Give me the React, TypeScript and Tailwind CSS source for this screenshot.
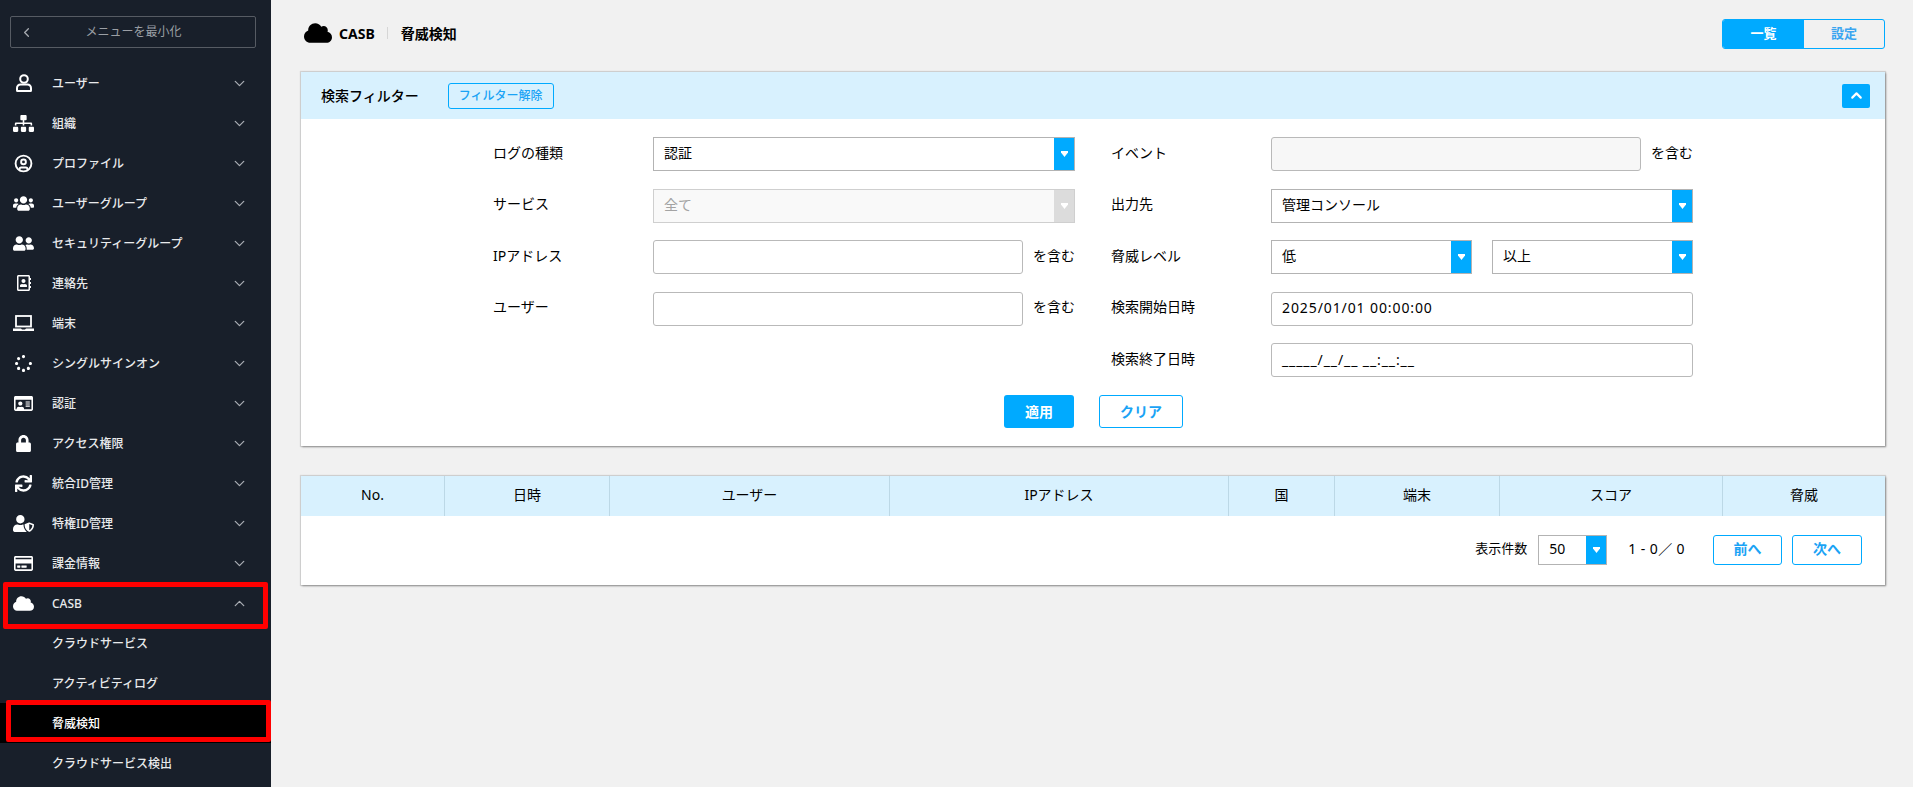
import React from "react";
import { FaSitemap, FaUsers, FaUserFriends, FaRegAddressBook, FaSpinner, FaRegIdCard, FaLock, FaSync, FaUserShield, FaRegCreditCard, FaCloud } from "react-icons/fa";
import { LuChevronDown, LuChevronUp, LuChevronLeft, LuCircleUser } from "react-icons/lu";

const FONT = "font-['Noto_Sans','Noto_Sans_CJK_JP',sans-serif]";

function UserIcon() {
  return (
    <svg width="16" height="18" viewBox="0 0 16 18" fill="none" stroke="currentColor" strokeWidth="2">
      <circle cx="8" cy="5" r="3.8" />
      <path d="M4.5 10.5h7a3.5 3.5 0 0 1 3.5 3.5v2.5a.5.5 0 0 1-.5.5h-13a.5.5 0 0 1-.5-.5V14a3.5 3.5 0 0 1 3.5-3.5z" />
    </svg>
  );
}

function LaptopIcon() {
  return (
    <svg width="21" height="16" viewBox="0 0 21 16" fill="none">
      <rect x="3" y="1" width="15" height="10.5" stroke="currentColor" strokeWidth="1.8" />
      <path d="M0 13.5h8l1 1h3l1-1h8v2.5H0z" fill="currentColor" />
    </svg>
  );
}

type Item = { label: string; icon: React.ReactNode };
const items: Item[] = [
  { label: "ユーザー", icon: <UserIcon /> },
  { label: "組織", icon: <FaSitemap size={21} /> },
  { label: "プロファイル", icon: <LuCircleUser size={19} strokeWidth={2.4} /> },
  { label: "ユーザーグループ", icon: <FaUsers size={21} /> },
  { label: "セキュリティーグループ", icon: <FaUserFriends size={21} /> },
  { label: "連絡先", icon: <FaRegAddressBook size={16} /> },
  { label: "端末", icon: <LaptopIcon /> },
  { label: "シングルサインオン", icon: <FaSpinner size={17} /> },
  { label: "認証", icon: <FaRegIdCard size={19} /> },
  { label: "アクセス権限", icon: <FaLock size={17} /> },
  { label: "統合ID管理", icon: <FaSync size={17} /> },
  { label: "特権ID管理", icon: <FaUserShield size={21} /> },
  { label: "課金情報", icon: <FaRegCreditCard size={19} /> },
];

function Row({ label, icon, open }: { label: string; icon?: React.ReactNode; open?: boolean }) {
  return (
    <div className="flex h-10 items-center pl-[13px] pr-[23px] text-[12px] font-medium text-[#e8eaec]">
      <span className="flex w-[21px] justify-center text-white">{icon}</span>
      <span className="ml-[18px] flex-1 pt-[2px]">{label}</span>
      {open ? <LuChevronUp size={17} strokeWidth={1.8} className="text-[#a9adb3]" /> : <LuChevronDown size={17} strokeWidth={1.8} className="text-[#a9adb3]" />}
    </div>
  );
}

function SubRow({ label, active }: { label: string; active?: boolean }) {
  return (
    <div className={`flex h-10 items-center pl-[52px] pt-[2px] text-[12px] font-medium ${active ? "bg-black text-white" : "text-[#e8eaec]"}`}>
      {label}
    </div>
  );
}

function Sidebar() {
  return (
    <aside className="relative w-[271px] shrink-0 bg-[#181f2a]">
      <div className="mx-[10px] mt-4 mb-[15px] flex h-8 w-[246px] items-center rounded-[2px] border border-[#565b63] pl-[8px] pr-[22px] text-[12px] text-[#9b9fa5]">
        <LuChevronLeft size={15} className="text-[#a9adb3]" />
        <span className="flex-1 text-center">メニューを最小化</span>
      </div>
      {items.map((it) => (
        <Row key={it.label} label={it.label} icon={it.icon} />
      ))}
      <Row label="CASB" icon={<FaCloud size={21} />} open />
      <SubRow label="クラウドサービス" />
      <SubRow label="アクティビティログ" />
      <SubRow label="脅威検知" active />
      <SubRow label="クラウドサービス検出" />
      <div className="absolute left-[3px] top-[582px] h-[47px] w-[265px] rounded-[2px] border-[5px] border-[#ff0000]" />
      <div className="absolute left-[6px] top-[700px] h-[42px] w-[265px] rounded-[2px] border-[5px] border-[#ff0000]" />
    </aside>
  );
}

function Select({ value, disabled, className }: { value: string; disabled?: boolean; className?: string }) {
  return (
    <div className={`flex h-[34px] items-center border pl-[10px] text-[14px] ${disabled ? "border-[#cfcfcf] bg-[#f9f9f9] text-[#a3a3a3]" : "border-[#b3b3b3] bg-white text-black"} ${className ?? "w-full"}`}>
      <span className="flex-1 pb-[3px]">{value}</span>
      <span className={`flex h-full w-[20px] items-center justify-center text-white ${disabled ? "bg-[#dcdcdc]" : "bg-[#00aaff]"}`}>
        <svg width="7" height="6" viewBox="0 0 7 6" fill="currentColor"><path d="M0 0h7v1.5L3.5 6 0 1.5z" /></svg>
      </span>
    </div>
  );
}

function Input({ value, bg, className }: { value?: string; bg?: boolean; className?: string }) {
  return (
    <div className={`flex h-[34px] items-center rounded-[3px] border border-[#b9b9b9] px-[10px] pb-[2px] text-[14px] tracking-[0.9px] text-black ${bg ? "bg-[#f7f7f7]" : "bg-white"} ${className ?? "w-full"}`}>
      {value}
    </div>
  );
}

function Contains({ bg }: { bg?: boolean }) {
  return (
    <div className="flex w-full items-center">
      <Input bg={bg} className="w-[370px]" />
      <span className="ml-[10px] whitespace-nowrap pb-[4px] text-[14px] text-black">を含む</span>
    </div>
  );
}

function Field({ label, children, ctrl }: { label?: string; children?: React.ReactNode; ctrl: string }) {
  return (
    <div className="flex items-center">
      <span className="w-[160px] shrink-0 pb-[4px] text-[14px] text-black">{label}</span>
      <div className={ctrl}>{children}</div>
    </div>
  );
}

const L = "w-[422px]";
const R = "w-[422px]";

function FilterForm() {
  return (
    <div className="flex flex-col gap-y-[17.5px] pl-[192px] pt-[18px]">
      <div className="flex gap-x-[36px]">
        <Field label="ログの種類" ctrl={L}><Select value="認証" /></Field>
        <Field label="イベント" ctrl={R}><Contains bg /></Field>
      </div>
      <div className="flex gap-x-[36px]">
        <Field label="サービス" ctrl={L}><Select value="全て" disabled /></Field>
        <Field label="出力先" ctrl={R}><Select value="管理コンソール" /></Field>
      </div>
      <div className="flex gap-x-[36px]">
        <Field label="IPアドレス" ctrl={L}><Contains /></Field>
        <Field label="脅威レベル" ctrl={R}>
          <div className="flex justify-between">
            <Select value="低" className="w-[201px]" />
            <Select value="以上" className="w-[201px]" />
          </div>
        </Field>
      </div>
      <div className="flex gap-x-[36px]">
        <Field label="ユーザー" ctrl={L}><Contains /></Field>
        <Field label="検索開始日時" ctrl={R}><Input value="2025/01/01 00:00:00" /></Field>
      </div>
      <div className="flex gap-x-[36px]">
        <div className="w-[582px]" />
        <Field label="検索終了日時" ctrl={R}><Input value="_____/__/__ __:__:__" /></Field>
      </div>
    </div>
  );
}

const cols: [string, string][] = [
  ["No.", "w-[144px]"],
  ["日時", "w-[165px]"],
  ["ユーザー", "w-[280px]"],
  ["IPアドレス", "w-[339px]"],
  ["国", "w-[106px]"],
  ["端末", "w-[165px]"],
  ["スコア", "w-[223px]"],
  ["脅威", "flex-1"],
];

const panelShadow = "shadow-[0_0_1px_1px_rgba(0,0,0,0.12),1px_1px_2px_rgba(0,0,0,0.35)]";

export default function App() {
  return (
    <div className={`flex h-[787px] w-[1913px] overflow-hidden bg-[#f1f1f1] ${FONT}`}>
      <Sidebar />
      <main className="flex-1 pl-[30px] pr-[28px]">
        <div className="flex h-[72px] items-start justify-between pt-[19px]">
          <div className="flex h-[30px] items-center pb-[2px] text-black">
            <FaCloud size={28} className="ml-[3px]" />
            <span className="ml-[7px] text-[14px] font-bold">CASB</span>
            <span className="ml-[12px] mr-[13px] h-[12px] w-px bg-[#d6d6d6]" />
            <span className="text-[14px] font-bold">脅威検知</span>
          </div>
          <div className="flex h-[30px] w-[163px] overflow-hidden rounded-[3px] border border-[#00aaff] text-[13px] font-bold">
            <span className="flex w-[81px] items-center justify-center bg-[#00aaff] text-white">一覧</span>
            <span className="flex flex-1 items-center justify-center text-[#3aa5f0]">設定</span>
          </div>
        </div>

        <section className={`h-[374px] bg-white ${panelShadow}`}>
          <div className="flex h-[47px] items-center bg-[#d8f1fe] pl-[20px] pr-[15px]">
            <span className="text-[14px] font-medium text-black">検索フィルター</span>
            <span className="ml-[29px] flex h-[26px] w-[106px] items-center justify-center rounded-[3px] border border-[#00aaff] text-[12px] font-medium text-[#1aa3f5]">フィルター解除</span>
            <span className="ml-auto flex h-[24px] w-[28px] items-center justify-center rounded-[2px] bg-[#00aaff] text-white">
              <LuChevronUp size={17} strokeWidth={3} />
            </span>
          </div>
          <FilterForm />
          <div className="mt-[18px] flex pl-[703px]">
            <button className="h-[33px] w-[70px] rounded-[3px] bg-[#00aaff] text-[14px] font-bold text-white">適用</button>
            <button className="ml-[25px] h-[33px] w-[84px] rounded-[3px] border border-[#00aaff] bg-white text-[14px] font-bold text-[#1aa3f5]">クリア</button>
          </div>
        </section>

        <section className={`mt-[30px] h-[109px] bg-white ${panelShadow}`}>
          <div className="flex h-[40px] bg-[#d8f1fe] text-[14px] text-black">
            {cols.map(([t, w], i) => (
              <div key={t} className={`flex items-center justify-center pb-[3px] ${w} ${i < 7 ? "border-r border-[#bcd8e6]" : ""}`}>{t}</div>
            ))}
          </div>
          <div className="flex h-[69px] items-start justify-end pr-[23px] pt-[19px] text-[14px] text-black">
            <span className="flex h-[30px] items-center pb-[3px] text-[13px]">表示件数</span>
            <Select value="50" className="ml-[11px] !h-[30px] w-[69px]" />
            <span className="ml-[21px] flex h-[30px] items-center pb-[3px] tracking-[0.4px]">1 - 0／ 0</span>
            <button className="ml-[28px] h-[30px] w-[69px] rounded-[3px] border border-[#00aaff] pb-[3px] text-[14px] font-bold text-[#1aa3f5]">前へ</button>
            <button className="ml-[10px] h-[30px] w-[70px] rounded-[3px] border border-[#00aaff] pb-[3px] text-[14px] font-bold text-[#1aa3f5]">次へ</button>
          </div>
        </section>
      </main>
    </div>
  );
}
